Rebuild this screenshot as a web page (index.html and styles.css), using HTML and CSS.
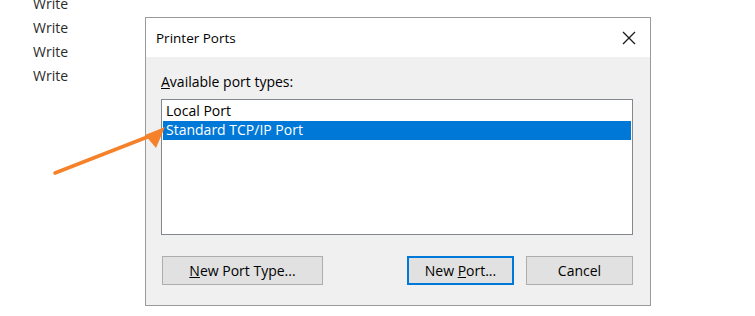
FILE: index.html
```html
<!DOCTYPE html>
<html lang="en">
<head>
    <meta charset="UTF-8">
    <meta name="viewport" content="width=device-width, initial-scale=1.0">
    <title>Printer Ports</title>
    <link rel="stylesheet" href="styles.css">
</head>
<body>
<div class="page">
    <ul class="writes">
        <li>Write</li>
        <li>Write</li>
        <li>Write</li>
        <li>Write</li>
    </ul>

    <div class="dialog">
        <div class="titlebar">
            <span class="title">Printer Ports</span>
            <svg class="close" width="14" height="14" viewBox="0 0 14 14">
                <path d="M1 1 L13 13 M13 1 L1 13" stroke="#1a1a1a" stroke-width="1.3" fill="none"/>
            </svg>
        </div>
        <div class="body">
            <p class="label"><u>A</u>vailable port types:</p>
            <div class="listbox">
                <div class="item">Local Port</div>
                <div class="item selected">Standard TCP/IP Port</div>
            </div>
            <div class="buttons">
                <button class="btn wide"><u>N</u>ew Port Type...</button>
                <div class="right">
                    <button class="btn default">New <u>P</u>ort...</button>
                    <button class="btn">Cancel</button>
                </div>
            </div>
        </div>
    </div>
</div>

<!-- callout arrow drawn over the screenshot -->
<svg class="arrow" width="755" height="316" viewBox="0 0 755 316">
    <line x1="55" y1="173" x2="150" y2="136" stroke="#f5822a" stroke-width="3.5" stroke-linecap="round"/>
    <polygon points="165,127 145,135 156,148" fill="#f5822a"/>
</svg>
</body>
</html>
```

FILE: styles.css
```css
* {
    margin: 0;
    padding: 0;
    box-sizing: border-box;
}
body {
    background: #fff;
    font-family: "Open Sans", "Noto Sans", sans-serif;
    font-size: 14px;
    color: #000;
    overflow: hidden;
}
.page {
    display: flex;
    align-items: flex-start;
    padding-left: 33px;
}
.writes {
    list-style: none;
    width: 112px;
    margin-top: -8px;
    color: #2b2b2b;
}
.writes li {
    line-height: 24px;
    height: 24px;
}
.dialog {
    margin-top: 17px;
    width: 506px;
    height: 289px;
    border: 1px solid #9a9a9a;
    background: #f0f0f0;
    display: flex;
    flex-direction: column;
}
.titlebar {
    height: 39px;
    background: #fff;
    display: flex;
    align-items: center;
    justify-content: space-between;
    padding: 0 14px 0 10px;
}
.title {
    font-size: 13.5px;
}
.body {
    flex: 1;
    padding: 16px 17px 0 15px;
}
.label {
    line-height: 18px;
    margin-bottom: 8px;
}
.listbox {
    width: 472px;
    height: 136px;
    background: #fff;
    border: 1px solid #828790;
    padding: 2px 1px;
}
.item {
    height: 19px;
    line-height: 18px;
    padding-left: 3px;
}
.item.selected {
    background: #0078d7;
    color: #fff;
}
.buttons {
    display: flex;
    justify-content: space-between;
    margin-top: 21px;
    width: 472px;
}
.right {
    display: flex;
    gap: 12px;
}
.btn {
    width: 107px;
    height: 29px;
    background: #e1e1e1;
    border: 1px solid #adadad;
    font-family: inherit;
    font-size: 14px;
    color: #000;
}
.btn.wide {
    width: 161px;
    margin-left: 1px;
}
.btn.default {
    border: 2px solid #0078d7;
}
.arrow {
    position: absolute;
    left: 0;
    top: 0;
    pointer-events: none;
}
```
